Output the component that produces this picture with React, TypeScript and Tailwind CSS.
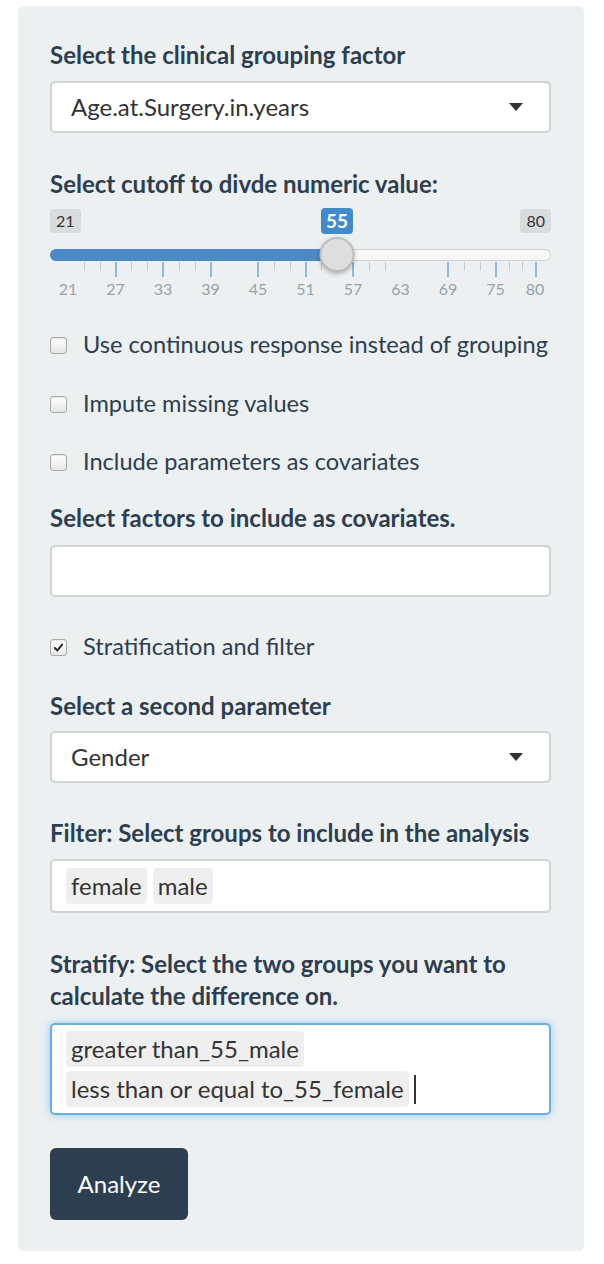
import React from "react";

const font = { fontFamily: "Lato, 'Noto Sans', sans-serif" };

// slider value -> x inside the slider box (slider box starts at page x=50)
const MIN = 21;
const MAX = 80;
const pos = (v: number) => 18 + (v - MIN) * ((485 - 18) / (MAX - MIN));

const majorTicks = [27, 33, 39, 45, 51, 57, 69, 75, 80];
const gridLabels = [21, 27, 33, 39, 45, 51, 57, 63, 69, 75, 80];
const minorSegments: [number, number][] = [
  [21, 27],
  [27, 33],
  [33, 39],
  [45, 51],
  [51, 57],
  [57, 63],
  [69, 75],
  [75, 80],
];
const minorTicks = minorSegments.flatMap(([a, b]) => [a + (b - a) / 3, a + ((b - a) * 2) / 3]);

function Label({ children, className = "" }: { children: React.ReactNode; className?: string }) {
  return <div className={"text-[24px] leading-[28px] font-bold text-[#2c3e50] " + className}>{children}</div>;
}

function SelectBox({ value, className = "" }: { value: string; className?: string }) {
  return (
    <div
      className={
        "flex h-[52px] items-center justify-between rounded-[5px] border-2 border-[#cfd3d5] bg-white pl-[19px] pr-[26px] " +
        className
      }
    >
      <span className="text-[24px] text-[#333]">{value}</span>
      <span className="h-0 w-0 border-x-[7px] border-t-[8px] border-x-transparent border-t-[#333]" />
    </div>
  );
}

function Check({ label, checked = false, className = "" }: { label: string; checked?: boolean; className?: string }) {
  return (
    <div className={"flex h-[28px] items-center " + className}>
      <span className="flex h-[17px] w-[17px] shrink-0 items-center justify-center rounded-[3px] border border-[#a9a9a9] bg-gradient-to-b from-white to-[#e6e6e6] shadow-[inset_0_1px_1px_rgba(0,0,0,0.1)]">
        {checked && (
          <svg width="11" height="11" viewBox="0 0 12 12">
            <path d="M2 6.5 L4.8 9.2 L10 2.8" fill="none" stroke="#2b2b2b" strokeWidth="2.2" strokeLinecap="round" strokeLinejoin="round" />
          </svg>
        )}
      </span>
      <span className="ml-[16px] whitespace-nowrap text-[23.6px] text-[#2c3e50]">{label}</span>
    </div>
  );
}

function Tag({ children }: { children: React.ReactNode }) {
  return (
    <span className="inline-flex h-[36px] items-center rounded-[4px] bg-[#efefef] px-[5px] text-[24px] text-[#333]">
      {children}
    </span>
  );
}

function Slider() {
  const handle = pos(55);
  return (
    <div className="relative mt-[9px] h-[96px] w-full">
      <span className="absolute left-0 top-[2px] flex h-[24px] items-center rounded-[4px] bg-[#d9dcdd] px-[6px] text-[16px] text-[#333]">
        21
      </span>
      <span
        className="absolute top-[1px] flex h-[26px] -translate-x-1/2 items-center rounded-[4px] bg-[#428bca] px-[5px] text-[19px] font-bold text-white"
        style={{ left: handle }}
      >
        55
      </span>
      <span className="absolute right-0 top-[2px] flex h-[24px] items-center rounded-[4px] bg-[#d9dcdd] px-[6px] text-[16px] text-[#333]">
        80
      </span>

      {/* track */}
      <div className="absolute left-0 right-0 top-[42px] h-[12px] rounded-full border border-[#d0d0d0] bg-[#f8f8f8]" />
      <div className="absolute left-0 top-[42px] h-[12px] rounded-l-full bg-[#4a8ac6]" style={{ width: handle }} />

      {/* grid */}
      {minorTicks.map((v) => (
        <span key={"m" + v} className="absolute top-[55px] h-[9px] w-px bg-[#c6c9cb]" style={{ left: pos(v) }} />
      ))}
      {majorTicks.map((v) => (
        <span key={"M" + v} className="absolute top-[55px] h-[15px] w-[2px] bg-[#8fb6de]" style={{ left: pos(v) - 0.5 }} />
      ))}
      {gridLabels.map((v) => (
        <span
          key={"l" + v}
          className="absolute top-[73px] -translate-x-1/2 text-[16px] leading-[18px] text-[#98a2ab]"
          style={{ left: pos(v) }}
        >
          {v}
        </span>
      ))}

      {/* handle */}
      <span
        className="absolute top-[30px] h-[35px] w-[35px] -translate-x-1/2 rounded-full border-2 border-[#bdbdbd] bg-[#dedede] shadow-[0_2px_4px_rgba(0,0,0,0.25)]"
        style={{ left: handle }}
      />
    </div>
  );
}

export default function App() {
  return (
    <div className="min-h-[1264px] bg-white pt-[6px]" style={font}>
      <section className="mx-[18px] flex w-[566px] flex-col rounded-[6px] bg-[#ecf0f1] pb-[31px] pl-[32px] pr-[33px] pt-[35px]">
        <Label>Select the clinical grouping factor</Label>
        <SelectBox className="mt-[12px]" value="Age.at.Surgery.in.years" />

        <Label className="mt-[37px]">Select cutoff to divde numeric value:</Label>
        <Slider />

        <Check className="mt-[28px]" label="Use continuous response instead of grouping" />
        <Check className="mt-[31px]" label="Impute missing values" />
        <Check className="mt-[30px]" label="Include parameters as covariates" />

        <Label className="mt-[28px]">Select factors to include as covariates.</Label>
        <div className="mt-[13px] h-[52px] rounded-[5px] border-2 border-[#cfd3d5] bg-white" />

        <Check className="mt-[36px]" label="Stratification and filter" checked />

        <Label className="mt-[31px]">Select a second parameter</Label>
        <SelectBox className="mt-[11px]" value="Gender" />

        <Label className="mt-[36px]">Filter: Select groups to include in the analysis</Label>
        <div className="mt-[12px] flex h-[54px] items-center gap-[6px] rounded-[5px] border-2 border-[#cfd3d5] bg-white px-[14px]">
          <Tag>female</Tag>
          <Tag>male</Tag>
        </div>

        <Label className="mt-[35px] leading-[32px]">
          Stratify: Select the two groups you want to calculate the difference on.
        </Label>
        <div className="mt-[11px] flex h-[92px] flex-col items-start justify-center gap-[4px] rounded-[5px] border-2 border-[#66afe9] bg-white px-[14px] shadow-[0_0_8px_rgba(102,175,233,0.6)]">
          <Tag>greater than_55_male</Tag>
          <div className="flex items-center">
            <Tag>less than or equal to_55_female</Tag>
            <span className="ml-[5px] h-[29px] w-[2px] bg-[#333]" />
          </div>
        </div>

        <div className="mt-[33px]">
          <button className="h-[72px] w-[138px] rounded-[6px] bg-[#2c3e50] text-[24px] text-white">Analyze</button>
        </div>
      </section>
    </div>
  );
}
